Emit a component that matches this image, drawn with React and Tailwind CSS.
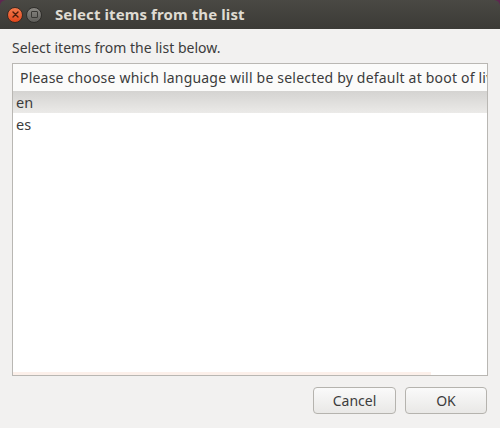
import React from 'react'

const items = ['en', 'es']

const TitleBar = () => (
  <div className="flex h-[29px] items-center rounded-t-[6px] bg-gradient-to-b from-[#4a4944] to-[#3b3a36] pl-[7px]">
    {/* close */}
    <div className="flex h-[16px] w-[16px] items-center justify-center rounded-full border border-[#3a2a22] bg-gradient-to-b from-[#f4794a] to-[#e2461a]">
      <svg width="7" height="7" viewBox="0 0 7 7">
        <path d="M1 1L6 6M6 1L1 6" stroke="#4a1d0c" strokeWidth="1.4" strokeLinecap="round" />
      </svg>
    </div>
    {/* maximize */}
    <div className="ml-[3px] flex h-[16px] w-[16px] items-center justify-center rounded-full border border-[#2f2e2b] bg-gradient-to-b from-[#8a8883] to-[#5f5e5a]">
      <div className="h-[7px] w-[7px] rounded-[1px] border border-[#3a3935]" />
    </div>
    <div className="ml-[13px] text-[15px] font-bold tracking-[0.1px] text-[#dfdbd2]">Select items from the list</div>
  </div>
)

const App = () => {
  return (
    <div
      className="h-[428px] w-[500px] overflow-hidden bg-[#5e2750]"
      style={{ fontFamily: '"Noto Sans", "Open Sans", sans-serif' }}
    >
      <TitleBar />
      <div className="flex h-[399px] flex-col bg-[#f2f1f0] px-[12px]">
        <div className="pt-[9px] text-[14px] leading-[20px] text-[#3c3c3c]">Select items from the list below.</div>

        {/* list */}
        <div className="mt-[5px] flex h-[313px] flex-col overflow-hidden border border-[#b9b7b3] bg-white">
          <div className="h-[27px] shrink-0 overflow-hidden whitespace-nowrap bg-[#fbfbfa] pl-[7px] text-[14px] leading-[27px] tracking-[0.2px] text-[#3c3c3c]">
            Please choose which language will be selected by default at boot of live system
          </div>
          {items.map((it, i) => (
            <div
              key={it}
              className={`h-[22px] pl-[3px] text-[14.5px] leading-[22px] text-[#3c3c3c] ${
                i === 0 ? 'bg-gradient-to-b from-[#d4d3d1] to-[#ebeae8]' : ''
              }`}
            >
              {it}
            </div>
          ))}
          <div className="flex-1" />
          <div className="h-[3px] w-[418px] bg-[#fcf0ea]" />
        </div>

        {/* buttons */}
        <div className="mt-[11px] flex justify-end gap-[9px] pr-[1px]">
          <button className="h-[27px] w-[83px] rounded-[4px] border border-[#b5b3ae] bg-gradient-to-b from-[#fafafa] to-[#e9e8e6] text-[14px] text-[#3c3c3c]">
            Cancel
          </button>
          <button className="h-[27px] w-[82px] rounded-[4px] border border-[#b5b3ae] bg-gradient-to-b from-[#fafafa] to-[#e9e8e6] text-[14px] text-[#3c3c3c]">
            OK
          </button>
        </div>
      </div>
    </div>
  )
}

export default App
